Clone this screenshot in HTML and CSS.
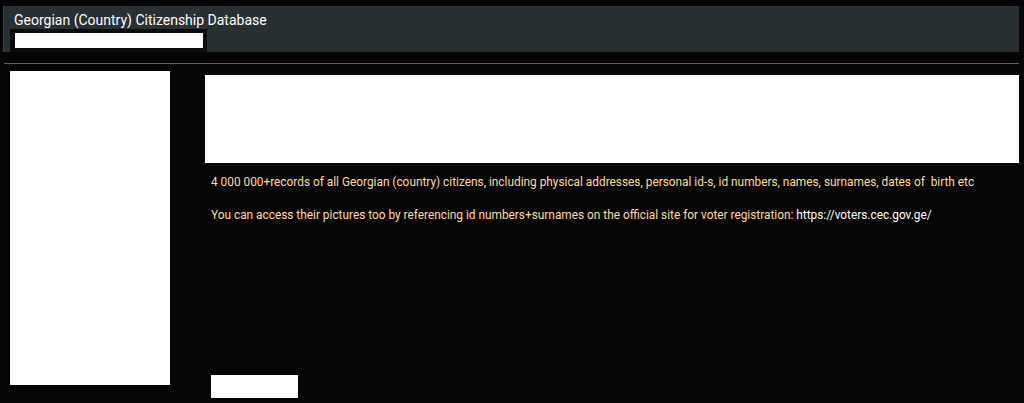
FILE: index.html
```html
<!DOCTYPE html>
<html lang="en">
<head>
    <meta charset="UTF-8">
    <title>Georgian (Country) Citizenship Database</title>
    <link rel="stylesheet" href="styles.css">
</head>
<body>
    <header class="topbar">
        <h1>Georgian (Country) Citizenship Database</h1>
        <div class="tab"><div class="tab-box"></div></div>
    </header>
    <hr class="divider">
    <div class="page">
        <aside class="sidebar"></aside>
        <main class="content">
            <div class="banner"></div>
            <div class="post">
                <p>4 000 000+records of all Georgian (country) citizens, including physical addresses, personal id-s, id numbers, names, surnames, dates of&nbsp; birth etc</p>
                <p>You can access their pictures too by referencing id numbers+surnames on the official site for voter registration: <a href="#" class="link">https://voters.cec.gov.ge/</a></p>
            </div>
            <div class="button-box"></div>
        </main>
    </div>
</body>
</html>
```

FILE: styles.css
```css
body {
    font-family: Roboto, 'Liberation Sans', sans-serif;
    margin: 0;
    padding: 6px 5px 0 3px;
    background-color: #050505;
    color: #ffffff;
    height: 403px;
    box-sizing: border-box;
    overflow: hidden;
}
.topbar {
    background-color: #283034;
    border-left: 1px solid #3a4347;
    height: 46px;
    box-sizing: border-box;
    padding: 5px 0 0 6px;
}
.topbar h1 {
    margin: 0 0 0 4px;
    font-size: 14px;
    font-weight: 400;
    line-height: 18px;
}
.tab {
    width: 197px;
    height: 23px;
    background-color: #0b0b0b;
    padding: 4px 0 0 5px;
    box-sizing: border-box;
}
.tab-box {
    width: 188px;
    height: 15px;
    background-color: #ffffff;
}
.divider {
    border: none;
    border-top: 1px solid #6b5e48;
    margin: 11px 0 0 1px;
}
.page {
    display: flex;
    gap: 35px;
    padding: 7px 0 0 7px;
}
.sidebar {
    width: 160px;
    height: 314px;
    background-color: #ffffff;
    flex-shrink: 0;
}
.content {
    flex: 1;
    padding-top: 4px;
}
.banner {
    height: 88px;
    background-color: #ffffff;
}
.post {
    padding: 12px 0 0 6px;
    height: 200px;
}
.post p {
    margin: 0 0 19px;
    font-size: 11.85px;
    line-height: 14px;
    color: #ffdca0;
}
.link {
    color: #ffffff;
    text-decoration: none;
}
.button-box {
    margin-left: 6px;
    width: 87px;
    height: 23px;
    background-color: #ffffff;
}
```
